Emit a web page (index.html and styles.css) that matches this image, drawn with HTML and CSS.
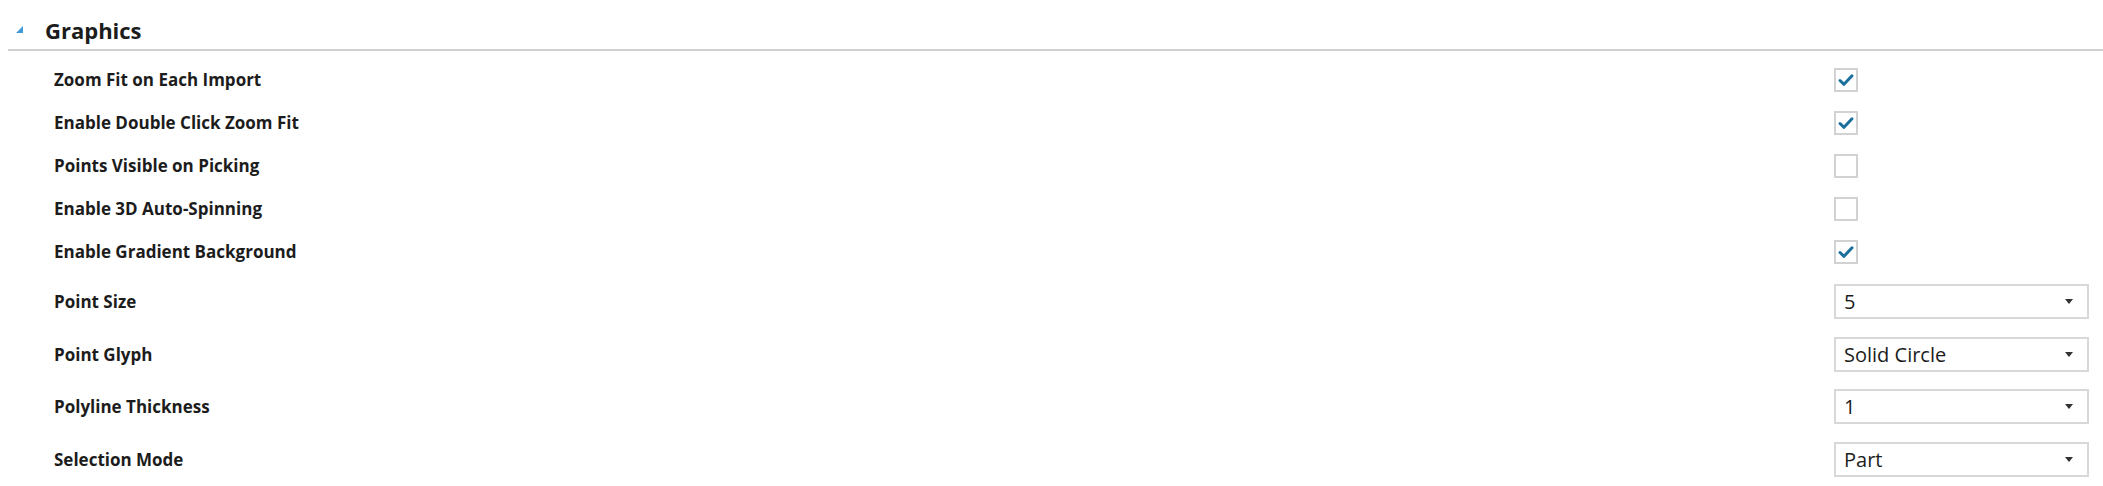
FILE: index.html
```html
<!DOCTYPE html>
<html lang="en">
<head>
    <meta charset="UTF-8">
    <title>Graphics Settings</title>
    <link rel="stylesheet" href="styles.css">
</head>
<body>
    <div class="panel">
        <div class="section-header">
            <span class="expander">
                <svg width="7" height="7" viewBox="0 0 7 7"><polygon points="7,0 7,7 0,7" fill="#3f9ad6"/></svg>
            </span>
            <span class="section-title">Graphics</span>
        </div>

        <div class="rows">
            <div class="row check-row">
                <span class="label">Zoom Fit on Each Import</span>
                <div class="control">
                    <span class="checkbox">
                        <svg width="20" height="20" viewBox="0 0 20 20"><path d="M4 10.5 L8 14.3 L16 5.8" fill="none" stroke="#1b6f9d" stroke-width="3" stroke-linecap="round" stroke-linejoin="round"/></svg>
                    </span>
                </div>
            </div>
            <div class="row check-row">
                <span class="label">Enable Double Click Zoom Fit</span>
                <div class="control">
                    <span class="checkbox">
                        <svg width="20" height="20" viewBox="0 0 20 20"><path d="M4 10.5 L8 14.3 L16 5.8" fill="none" stroke="#1b6f9d" stroke-width="3" stroke-linecap="round" stroke-linejoin="round"/></svg>
                    </span>
                </div>
            </div>
            <div class="row check-row">
                <span class="label">Points Visible on Picking</span>
                <div class="control">
                    <span class="checkbox"></span>
                </div>
            </div>
            <div class="row check-row">
                <span class="label">Enable 3D Auto-Spinning</span>
                <div class="control">
                    <span class="checkbox"></span>
                </div>
            </div>
            <div class="row check-row">
                <span class="label">Enable Gradient Background</span>
                <div class="control">
                    <span class="checkbox">
                        <svg width="20" height="20" viewBox="0 0 20 20"><path d="M4 10.5 L8 14.3 L16 5.8" fill="none" stroke="#1b6f9d" stroke-width="3" stroke-linecap="round" stroke-linejoin="round"/></svg>
                    </span>
                </div>
            </div>

            <div class="select-group">
                <div class="row select-row">
                    <span class="label">Point Size</span>
                    <div class="control">
                        <div class="select">
                            <span class="select-value">5</span>
                            <svg class="select-arrow" width="8" height="5" viewBox="0 0 8 5"><polygon points="0,0 8,0 4,5" fill="#333"/></svg>
                        </div>
                    </div>
                </div>
                <div class="row select-row">
                    <span class="label">Point Glyph</span>
                    <div class="control">
                        <div class="select">
                            <span class="select-value">Solid Circle</span>
                            <svg class="select-arrow" width="8" height="5" viewBox="0 0 8 5"><polygon points="0,0 8,0 4,5" fill="#333"/></svg>
                        </div>
                    </div>
                </div>
                <div class="row select-row">
                    <span class="label">Polyline Thickness</span>
                    <div class="control">
                        <div class="select">
                            <span class="select-value">1</span>
                            <svg class="select-arrow" width="8" height="5" viewBox="0 0 8 5"><polygon points="0,0 8,0 4,5" fill="#333"/></svg>
                        </div>
                    </div>
                </div>
                <div class="row select-row">
                    <span class="label">Selection Mode</span>
                    <div class="control">
                        <div class="select">
                            <span class="select-value">Part</span>
                            <svg class="select-arrow" width="8" height="5" viewBox="0 0 8 5"><polygon points="0,0 8,0 4,5" fill="#333"/></svg>
                        </div>
                    </div>
                </div>
            </div>
        </div>
    </div>
</body>
</html>
```

FILE: styles.css
```css
body {
    margin: 0;
    padding: 0;
    background: #ffffff;
    font-family: "Open Sans", "Noto Sans", sans-serif;
    color: #1c1c1c;
    overflow: hidden;
}

.panel {
    width: 100%;
}

.section-header {
    display: flex;
    align-items: center;
    height: 39px;
    padding-top: 10px;
    margin-left: 8px;
    padding-left: 8px;
    border-bottom: 2px solid #d0d0d0;
}

.expander {
    display: flex;
    width: 7px;
    margin-right: 22px;
}

.section-title {
    font-size: 22px;
    font-weight: 700;
}

.rows {
    padding-top: 7px;
}

.row {
    display: grid;
    grid-template-columns: 1fr 255px;
    align-items: center;
    padding: 0 14px 0 54px;
}

.check-row {
    height: 43px;
}

.select-group {
    padding-top: 2px;
}

.select-row {
    height: 52.7px;
}

.label {
    font-size: 17px;
    font-weight: 700;
}

.checkbox {
    display: flex;
    align-items: center;
    justify-content: center;
    width: 20px;
    height: 20px;
    border: 2px solid #d2d2d2;
    background: #fff;
}

.select {
    display: flex;
    align-items: center;
    justify-content: space-between;
    height: 31px;
    padding: 0 14px 0 8px;
    border: 2px solid #d8d8d8;
    background: #fff;
}

.select-value {
    font-size: 20px;
}
```
